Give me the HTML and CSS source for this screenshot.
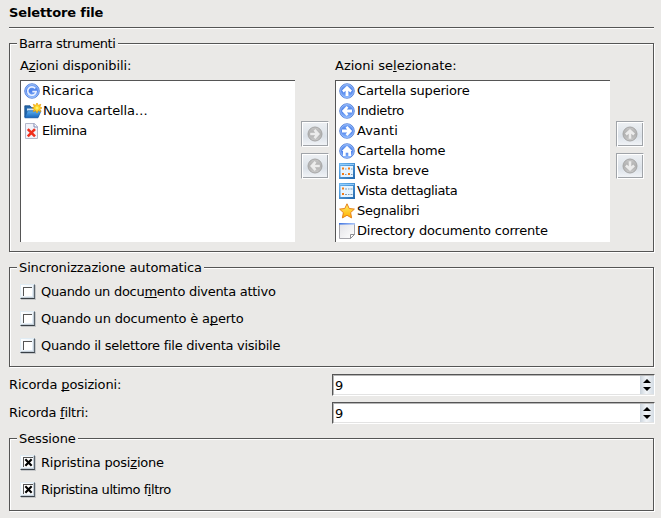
FILE: index.html
```html
<!DOCTYPE html>
<html lang="it">
<head>
<meta charset="utf-8">
<title>Selettore file</title>
<link rel="stylesheet" href="styles.css">
</head>
<body>
<svg class="defs" width="0" height="0" aria-hidden="true">
  <defs>
    <linearGradient id="blue" x1="0" y1="0" x2="0" y2="1"><stop offset="0" stop-color="#7aa9f6"/><stop offset=".5" stop-color="#4c80ea"/><stop offset="1" stop-color="#8fbcff"/></linearGradient>
    <linearGradient id="grey" x1="0" y1="0" x2="0" y2="1"><stop offset="0" stop-color="#c6c6c6"/><stop offset=".5" stop-color="#b0b0b0"/><stop offset="1" stop-color="#cacaca"/></linearGradient>
    <linearGradient id="gold" x1="0" y1="0" x2="0" y2="1"><stop offset="0" stop-color="#fff06a"/><stop offset="1" stop-color="#ffae00"/></linearGradient>
    <linearGradient id="folder" x1="0" y1="0" x2="0" y2="1"><stop offset="0" stop-color="#5fb0ee"/><stop offset="1" stop-color="#1766bd"/></linearGradient>
    <linearGradient id="paper" x1="0" y1="0" x2="1" y2="1"><stop offset="0" stop-color="#e2e2e6"/><stop offset="1" stop-color="#fff"/></linearGradient>
    <linearGradient id="bar" x1="0" y1="0" x2="1" y2="0"><stop offset="0" stop-color="#3f73e0"/><stop offset="1" stop-color="#a9c5fa"/></linearGradient>
    <linearGradient id="frame" x1="0" y1="0" x2="1" y2="1"><stop offset="0" stop-color="#6cb8f4"/><stop offset="1" stop-color="#2368ac"/></linearGradient>
    <symbol id="disc" viewBox="0 0 16 16"><circle cx="8" cy="8" r="7.3" fill="url(#blue)" stroke="#4a78d4" stroke-width=".8"/><circle cx="8" cy="8" r="6.4" fill="none" stroke="#a9c7ff" stroke-width=".7"/></symbol>
    <symbol id="disc-off" viewBox="0 0 16 16"><circle cx="8" cy="8" r="7" fill="url(#grey)" stroke="#a6a6a6" stroke-width="1"/></symbol>
    <symbol id="arrow" viewBox="0 0 16 16"><path d="M8 2.8 L13 7.6 L11.3 9.4 L9.4 7.8 V13 H6.6 V7.8 L4.7 9.4 L3 7.6 Z" fill="#fff"/></symbol>
    <symbol id="arrow-off" viewBox="0 0 16 16"><path d="M8 3 L13 7.6 L11.3 9.4 L9.3 7.8 V12.8 H6.7 V7.8 L4.7 9.4 L3 7.6 Z" fill="#ececec"/></symbol>
    <symbol id="view" viewBox="0 0 16 16"><rect width="16" height="16" fill="url(#frame)"/><rect x="1" y="1" width="14" height="1" fill="#8fcbfa"/><rect x="1.5" y="3" width="12.5" height="11" fill="#e6f4ff"/></symbol>
  </defs>
</svg>
<main class="page">
  <h1 class="title">Selettore file</h1>

  <section class="group toolbar">
    <h2 class="legend tight-4">Barra strumenti</h2>
    <div class="picker">
      <div class="column">
        <div class="label tight-1">A<u>z</u>ioni disponibili:</div>
        <ul class="list">
          <li><svg class="icon" viewBox="0 0 16 16"><use href="#disc"/><path d="M11.2 5.4 A4.2 4.2 0 1 0 12.1 8.6 H8.3" fill="none" stroke="#e7efff" stroke-width="1.7"/></svg><span>Ricarica</span></li>
          <li class="tight-2"><svg class="icon wide" viewBox="0 0 18 16"><path d="M.8 14 V2.8 H6 L7.5 4.5 H14 V14 Z" fill="#2468ad" stroke="#174d88" stroke-width=".8"/><path d="M3 5.5 H12 V9 H3Z" fill="#cfe3f5"/><path d="M3.5 7.8 H17 L14 14.8 H.8 Z" fill="url(#folder)" stroke="#155aa8" stroke-width=".7"/><path d="M13 0 L14.2 2.4 L16.8 1.3 L15.8 3.8 L18 5 L15.8 6.1 L16.8 8.6 L14.2 7.6 L13 10 L11.8 7.6 L9.3 8.6 L10.3 6.1 L8.2 5 L10.3 3.8 L9.3 1.3 L11.8 2.4 Z" fill="#ffd529" stroke="#ec9b00" stroke-width=".7"/><circle cx="13" cy="5" r="1.5" fill="#fff36b"/></svg><span>Nuova cartella…</span></li>
          <li class="tight-5"><svg class="icon" viewBox="0 0 16 16"><path d="M1.5 .5 H10.5 L13.5 3.5 V15.5 H1.5 Z" fill="#f2f3fa" stroke="#b4b8cb"/><path d="M10 .5 V4 H13.5" fill="#fff" stroke="#7f88b4"/><path d="M3.8 6.2 L11 13.4 M11 6.2 L3.8 13.4" stroke="#ef2e1c" stroke-width="2.6"/></svg><span>Elimina</span></li>
        </ul>
      </div>
      <div class="buttons">
        <button class="push" disabled><svg class="icon" viewBox="0 0 16 16"><use href="#disc-off"/><use href="#arrow-off" transform="rotate(90 8 8)"/></svg></button>
        <button class="push" disabled><svg class="icon" viewBox="0 0 16 16"><use href="#disc-off"/><use href="#arrow-off" transform="rotate(-90 8 8)"/></svg></button>
      </div>
      <div class="column">
        <div class="label">Azioni se<u>l</u>ezionate:</div>
        <ul class="list">
          <li class="tight-2"><svg class="icon" viewBox="0 0 16 16"><use href="#disc"/><use href="#arrow"/></svg><span>Cartella superiore</span></li>
          <li class="tight-4"><svg class="icon" viewBox="0 0 16 16"><use href="#disc"/><use href="#arrow" transform="rotate(-90 8 8)"/></svg><span>Indietro</span></li>
          <li><svg class="icon" viewBox="0 0 16 16"><use href="#disc"/><use href="#arrow" transform="rotate(90 8 8)"/></svg><span>Avanti</span></li>
          <li class="tight-3"><svg class="icon" viewBox="0 0 16 16"><use href="#disc"/><path d="M8 2.8 L13.2 8 H12 V13 H9.3 V9.8 H6.7 V13 H4 V8 H2.8 Z" fill="#fff"/></svg><span>Cartella home</span></li>
          <li class="tight-1"><svg class="icon" viewBox="0 0 16 16"><use href="#view"/><path d="M3 4.5h2v2h-2z M9 4.5h2v2h-2z M3 10h2v2h-2z M9 10h2v2h-2z" fill="#f47b14"/><path d="M6 6h1.5 M12 6h1.5 M6 11.5h1.5 M12 11.5h1.5" stroke="#829db4"/></svg><span>Vista breve</span></li>
          <li class="tight-4"><svg class="icon" viewBox="0 0 16 16"><use href="#view"/><path d="M3 4.5h2v2h-2z M3 10h2v2h-2z" fill="#f47b14"/><path d="M6 6h2 M9 6h1.5 M11.5 6h2 M6 11.5h2 M9 11.5h1.5 M11.5 11.5h2" stroke="#829db4"/></svg><span>Vista dettagliata</span></li>
          <li class="tight-3"><svg class="icon" viewBox="0 0 16 16"><path d="M8 .8 L10.2 5.5 L15.4 6.1 L11.6 9.6 L12.6 14.9 L8 12.3 L3.4 14.9 L4.4 9.6 L.6 6.1 L5.8 5.5 Z" fill="url(#gold)" stroke="#e6801a" stroke-width="1" stroke-linejoin="round"/></svg><span>Segnalibri</span></li>
          <li class="tight-2"><svg class="icon" viewBox="0 0 16 16"><path d="M.5 .5 H15.5 V11.5 L11.5 15.5 H.5 Z" fill="url(#paper)" stroke="#a5a5ab"/><path d="M0 0h16v1.6h-16z" fill="url(#bar)"/><path d="M15.5 11.5 H11.5 V15.5 Z" fill="#fff" stroke="#8f8f94"/></svg><span>Directory documento corrente</span></li>
        </ul>
      </div>
      <div class="buttons">
        <button class="push" disabled><svg class="icon" viewBox="0 0 16 16"><use href="#disc-off"/><use href="#arrow-off"/></svg></button>
        <button class="push" disabled><svg class="icon" viewBox="0 0 16 16"><use href="#disc-off"/><use href="#arrow-off" transform="rotate(180 8 8)"/></svg></button>
      </div>
    </div>
  </section>

  <section class="group sync">
    <h2 class="legend tight-1">Sincronizzazione automatica</h2>
    <div class="checks">
      <div class="check tight-3"><span class="box"><i></i></span><span>Quando un docu<u>m</u>ento diventa attivo</span></div>
      <div class="check tight-2"><span class="box"><i></i></span><span>Quando un documento è a<u>p</u>erto</span></div>
      <div class="check tight-3"><span class="box"><i></i></span><span>Quando il selettore file diventa visibile</span></div>
    </div>
  </section>

  <div class="fields">
    <div class="field"><span class="tight-1">Ricorda <u>p</u>osizioni:</span>
      <div class="spin"><span class="value">9</span><span class="steps"><svg width="8" height="12" viewBox="0 0 8 12"><path d="M4 0 L8 4 H0Z M0 8 H8 L4 12Z"/></svg></span></div></div>
    <div class="field"><span class="tight-3">Ricorda <u>f</u>iltri:</span>
      <div class="spin"><span class="value">9</span><span class="steps"><svg width="8" height="12" viewBox="0 0 8 12"><path d="M4 0 L8 4 H0Z M0 8 H8 L4 12Z"/></svg></span></div></div>
  </div>

  <section class="group session">
    <h2 class="legend tight-1">Sessione</h2>
    <div class="checks">
      <div class="check tight-2"><span class="box on"><svg width="10" height="10" viewBox="0 0 10 10"><path d="M1.5 1.5 L8.5 8.5 M8.5 1.5 L1.5 8.5" stroke="#000" stroke-width="2.4"/></svg></span><span>Ripristina posi<u>z</u>ione</span></div>
      <div class="check tight-5"><span class="box on"><svg width="10" height="10" viewBox="0 0 10 10"><path d="M1.5 1.5 L8.5 8.5 M8.5 1.5 L1.5 8.5" stroke="#000" stroke-width="2.4"/></svg></span><span>Ripristina ultimo f<u>i</u>ltro</span></div>
    </div>
  </section>
</main>
</body>
</html>
```

FILE: styles.css
```css
* { box-sizing: border-box; }
body {
  margin: 0;
  background: #eae9e7;
  color: #000;
  font: 13px/20px "DejaVu Sans", sans-serif;
}
.defs { display: block; height: 0; }
u { text-underline-offset: 1px; text-decoration-thickness: 1px; text-decoration-skip-ink: none; }
.tight-1 { letter-spacing: -.12px; }
.tight-2 { letter-spacing: -.2px; }
.tight-3 { letter-spacing: -.27px; }
.tight-4 { letter-spacing: -.4px; }
.tight-5 { letter-spacing: -.46px; }
.page { height: 518px; padding: 0 7px 0 9px; overflow: hidden; }
.title {
  height: 28px;
  margin: 0 0 15px;
  padding-top: 3px;
  border-bottom: 1px solid #555;
  box-shadow: 0 1px #fff;
  font-size: 13px;
  font-weight: bold;
  letter-spacing: -.12px;
}
.group {
  border: 1px solid #555;
  box-shadow: inset 1px 1px #fff, 1px 1px #fff;
  padding: 0 10px;
}
.legend {
  display: block;
  width: fit-content;
  height: 20px;
  margin: -10px 0 0 -3px;
  padding: 0 2px;
  background: #eae9e7;
  font-size: 13px;
  font-weight: normal;
}
.toolbar { height: 209px; margin-bottom: 15px; }
.picker { display: flex; gap: 6px; padding-top: 2px; }
.column { flex: none; width: 275px; }
.label { height: 24px; }
.list {
  height: 162px;
  margin: 0;
  padding: 0 0 0 3px;
  border-top: 1px solid #555;
  border-left: 1px solid #555;
  background: #fff;
  list-style: none;
}
.list li { display: flex; align-items: center; gap: 2px; height: 20px; white-space: nowrap; }
.icon { flex: none; width: 16px; height: 16px; }
.icon.wide { width: 18px; margin-right: -1px; }
.buttons { flex: none; display: flex; flex-direction: column; gap: 6px; width: 28px; padding-top: 65px; }
.push {
  display: flex;
  align-items: center;
  justify-content: center;
  width: 28px;
  height: 26px;
  padding: 0;
  border: 1px solid #a0a4a9;
  border-right-color: #fff;
  border-bottom-color: #fff;
  background: linear-gradient(#edf0f3, #dce2e9 60%, #f3f5f8);
  box-shadow: inset 1px 1px #fff, inset -1px -1px #a0a4a9;
}
.sync { height: 100px; margin-bottom: 7px; }
.checks { display: flex; flex-direction: column; gap: 7px; padding-top: 4px; }
.check { display: flex; align-items: center; gap: 6px; height: 20px; }
.box {
  display: flex;
  align-items: center;
  justify-content: center;
  width: 15px;
  height: 15px;
  margin-bottom: 2px;
  border: 1px solid #e0ecf4;
  border-right-color: #59636c;
  border-bottom-color: #394047;
  background: linear-gradient(135deg, #fff, #dce9f5);
  box-shadow: inset -1px -1px #c2ccd5, 1px 1px #c4c6c8;
}
.box i { width: 9px; height: 9px; border-top: 1px solid #555; border-left: 1px solid #555; background: #fff; }
.box svg { flex: none; background: #fff; border-top: 1px solid #555; border-left: 1px solid #555; }
.fields { display: flex; flex-direction: column; gap: 6px; margin: 0 -1px 14px 0; }
.field { display: flex; justify-content: space-between; align-items: center; height: 22px; }
.spin {
  display: flex;
  width: 323px;
  height: 22px;
  border: 1px solid #555;
  border-right-color: #fff;
  border-bottom-color: #fff;
  background: #fff;
  box-shadow: inset 1px 1px #b5b5b5, inset 0 -1px #e3e3e3;
}
.value { flex: 1; padding: 1px 0 0 2px; }
.steps {
  display: flex;
  align-items: center;
  justify-content: center;
  width: 14px;
  margin: 1px 0;
  background: linear-gradient(90deg, #cad3dc, #f2f5f8 45%, #d4dce4);
}
.session { height: 73px; }
```
